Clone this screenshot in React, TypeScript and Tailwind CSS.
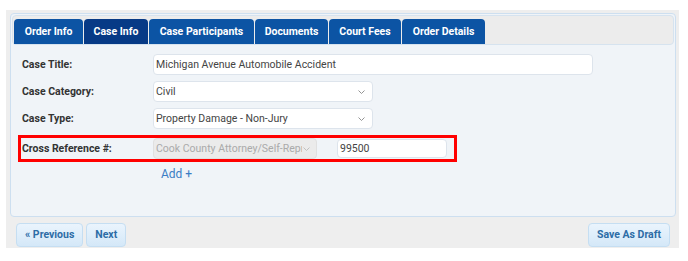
import React from "react";

const tabs = [
  { label: "Order Info", w: "w-[69px]", active: false },
  { label: "Case Info", w: "w-[64px]", active: true },
  { label: "Case Participants", w: "w-[105px]", active: false },
  { label: "Documents", w: "w-[73px]", active: false },
  { label: "Court Fees", w: "w-[72px]", active: false },
  { label: "Order Details", w: "w-[83px]", active: false },
];

function Chevron({ className }: { className?: string }) {
  return (
    <svg width="7" height="4" viewBox="0 0 7 4" className={className} fill="none">
      <path d="M0.5 0.5 L3.5 3.5 L6.5 0.5" stroke="currentColor" strokeWidth="0.9" />
    </svg>
  );
}

const labelCls = "w-[132px] pl-[1px] font-bold text-[10.5px] text-[#333]";
const btnCls =
  "h-[24px] px-[8px] rounded-[4px] border border-[#c5def2] bg-gradient-to-b from-[#eaf4fd] to-[#d4e8f8] text-[#2d6ca6] font-bold text-[10.5px]";

export default function App() {
  return (
    <div
      className="w-[688px] h-[261px] bg-white pt-[10px] pl-[6px]"
      style={{ fontFamily: "Roboto, 'Liberation Sans', sans-serif" }}
    >
      <div className="w-[673px] h-[238px] bg-[#eeeeee] pt-[3px] pl-[4px]">
        <div className="w-[666px] h-[204px] border border-[#cddff0] rounded-[4px] bg-[#f0f4f8] p-px">
          <div className="h-[30px] bg-[#ececec] border border-[#d6e3ef] rounded-[4px] flex items-end gap-px pl-px">
            {tabs.map((t) => (
              <div
                key={t.label}
                className={`${t.w} h-[25px] rounded-t-[4px] flex items-center justify-center text-white font-bold text-[10.5px] ${
                  t.active ? "bg-[#073a86]" : "bg-[#0c54a4]"
                }`}
              >
                {t.label}
              </div>
            ))}
          </div>
          <div className="pt-[6px] pl-[6px]">
            <div className="flex items-center h-[27px] border-[3px] border-transparent">
              <div className={labelCls}>Case Title:</div>
              <div className="w-[440px] h-[21px] bg-white border border-[#dde4ec] rounded-[4px] flex items-center pl-[2px] text-[10.5px] text-[#444]">
                Michigan Avenue Automobile Accident
              </div>
            </div>
            <div className="flex items-center h-[27px] border-[3px] border-transparent">
              <div className={labelCls}>Case Category:</div>
              <div className="w-[220px] h-[21px] bg-white border border-[#dde4ec] rounded-[4px] flex items-center justify-between pl-[2px] pr-[7px] text-[10.5px] text-[#444]">
                <span>Civil</span>
                <Chevron className="text-[#888]" />
              </div>
            </div>
            <div className="flex items-center h-[27px] border-[3px] border-transparent">
              <div className={labelCls}>Case Type:</div>
              <div className="w-[220px] h-[21px] bg-white border border-[#dde4ec] rounded-[4px] flex items-center justify-between pl-[2px] pr-[7px] text-[10.5px] text-[#444]">
                <span>Property Damage - Non-Jury</span>
                <Chevron className="text-[#888]" />
              </div>
            </div>
            <div className="mt-[3px] w-[439px] flex items-center h-[27px] border-[3px] border-[#ff0000]">
              <div className={labelCls}>Cross Reference #:</div>
              <div className="w-[164px] h-[21px] bg-[#ebebeb] border border-[#e0e0e0] rounded-[4px] flex items-center pl-[2px] text-[10.5px] text-[#aaa]">
                <span className="block whitespace-nowrap overflow-hidden w-[146px] leading-[19px]">Cook County Attorney/Self-Repr</span>
                <Chevron className="text-[#bbb] ml-px" />
              </div>
              <div className="ml-[20px] w-[110px] h-[19px] bg-white border border-[#dde4ec] rounded-[4px] flex items-center pl-[2px] text-[10.5px] text-[#444]">
                99500
              </div>
            </div>
            <div className="h-[24px] flex items-center pl-[143px] text-[12px] text-[#3b7dc4]">
              Add +
            </div>
          </div>
        </div>
        <div className="flex justify-between pl-[6px] pr-[9px] mt-[6px]">
          <div className="flex gap-[3px]">
            <button className={btnCls}>« Previous</button>
            <button className={btnCls}>Next</button>
          </div>
          <button className={btnCls}>Save As Draft</button>
        </div>
      </div>
    </div>
  );
}
